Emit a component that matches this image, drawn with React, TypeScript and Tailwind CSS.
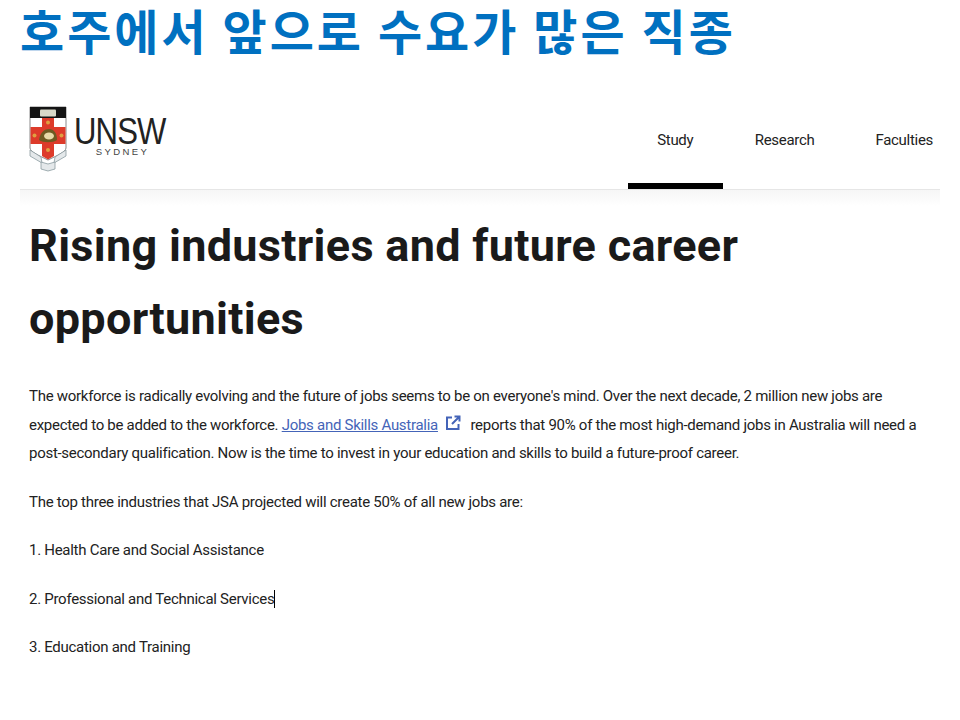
const Crest = () => (
  <svg width="38" height="66" viewBox="0 0 38 66" className="shrink-0">
    <path d="M1 1H37V42C37 46 27 50 19 54C11 50 1 46 1 42Z" fill="#fff" stroke="#8a8a8a" strokeWidth="1" />
    <rect x="1" y="1" width="36" height="11" fill="#141414" />
    <rect x="11" y="3.500" width="16" height="7" rx="1" fill="#d8d8c8" />
    <path d="M13 12H25V21H36.500V38H25V50L19 53.500L13 50V38H1.500V21H13Z" fill="#dd3b2a" />
    <circle cx="19" cy="16.500" r="2" fill="#e0a040" />
    <circle cx="19" cy="44" r="2" fill="#e0a040" />
    <circle cx="5.500" cy="29.500" r="2" fill="#e0a040" />
    <circle cx="32.500" cy="29.500" r="2" fill="#e0a040" />
    <path d="M10 34C11 26 16 23 20 23C25 23 28 27 28 34C24 37 14 37 10 34Z" fill="#6e5a22" />
    <ellipse cx="20" cy="30" rx="5" ry="3.500" fill="#e8d9a8" />
    <path d="M1 44L12 51L13 57L1 50Z" fill="#e4e8ea" stroke="#8a9aa0" strokeWidth="0.8" />
    <path d="M37 44L26 51L25 57L37 50Z" fill="#e4e8ea" stroke="#8a9aa0" strokeWidth="0.8" />
    <path d="M12 56L19 58L26 56V63L19 65L12 63Z" fill="#e4e8ea" stroke="#8a9aa0" strokeWidth="0.8" />
  </svg>
);

const ExternalIcon = () => (
  <svg width="16" height="16" viewBox="0 0 16 16" fill="none" stroke="#4464b8" strokeWidth="2" className="mr-[6px] ml-[7px] inline-block align-[-1px]">
    <path d="M7 2.500H2V14H13.500V9" />
    <path d="M7 9L14 2M9.500 1.500H14.500V6.500" />
  </svg>
);

export default function App() {
  return (
    <div className="h-[720px] w-[960px] overflow-hidden bg-white font-['Roboto','Liberation_Sans',sans-serif]">
      <h1 className="h-[96px] pl-5 font-['Noto_Sans_CJK_KR',sans-serif] text-[48px] leading-[58px] font-bold tracking-[3px] whitespace-nowrap text-[#0070c0]">
        호주에서 앞으로 수요가 많은 직종
      </h1>

      <div className="mx-5 flex h-[94px] items-stretch justify-between border-b border-[#e6e6e6]">
        <div className="flex items-center gap-[7px] pb-[7px] pl-[9px]">
          <Crest />
          <div className="mb-[3px] flex w-[89px] flex-col">
            <span className="origin-left scale-x-[0.84] font-['Liberation_Sans',sans-serif] text-[37px] leading-[28px] tracking-[-1px] whitespace-nowrap text-[#222]">UNSW</span>
            <span className="pl-[8px] text-center font-['Liberation_Sans',sans-serif] text-[9.5px] leading-[11px] tracking-[2.4px] text-[#444]">SYDNEY</span>
          </div>
        </div>
        <nav className="flex items-stretch pr-[7px] text-[15px] tracking-[-0.3px] text-[#222]">
          <a className="flex w-[95px] items-center justify-center border-b-[6px] border-black pt-[2px]">Study</a>
          <a className="ml-[32px] flex items-center pb-[4px]">Research</a>
          <a className="ml-[61px] flex items-center pb-[4px]">Faculties</a>
        </nav>
      </div>
      <div className="mx-5 h-4 bg-gradient-to-b from-[#f6f6f6] to-white" />

      <div className="mt-[3px] px-[29px]">
        <h2 className="text-[45px] leading-[73px] font-bold tracking-[0.3px] text-[#1a1a1a]">
          Rising industries and future career
          <br />
          opportunities
        </h2>
        <div className="mt-[27px] w-[900px] text-[15px] leading-[28.5px] tracking-[-0.28px] text-[#222]">
          <p className="whitespace-nowrap">
            The workforce is radically evolving and the future of jobs seems to be on everyone's mind. Over the next decade, 2 million new jobs are
            <br />
            expected to be added to the workforce. <a className="text-[#4464b8] underline">Jobs and Skills Australia</a>
            <ExternalIcon /> reports that 90% of the most high-demand jobs in Australia will need a
            <br />
            post-secondary qualification. Now is the time to invest in your education and skills to build a future-proof career.
          </p>
          <p className="mt-5">The top three industries that JSA projected will create 50% of all new jobs are:</p>
          <p className="mt-5">1. Health Care and Social Assistance</p>
          <p className="mt-5">
            2. Professional and Technical Services<span className="border-r border-black" />
          </p>
          <p className="mt-5">3. Education and Training</p>
        </div>
      </div>
    </div>
  );
}
